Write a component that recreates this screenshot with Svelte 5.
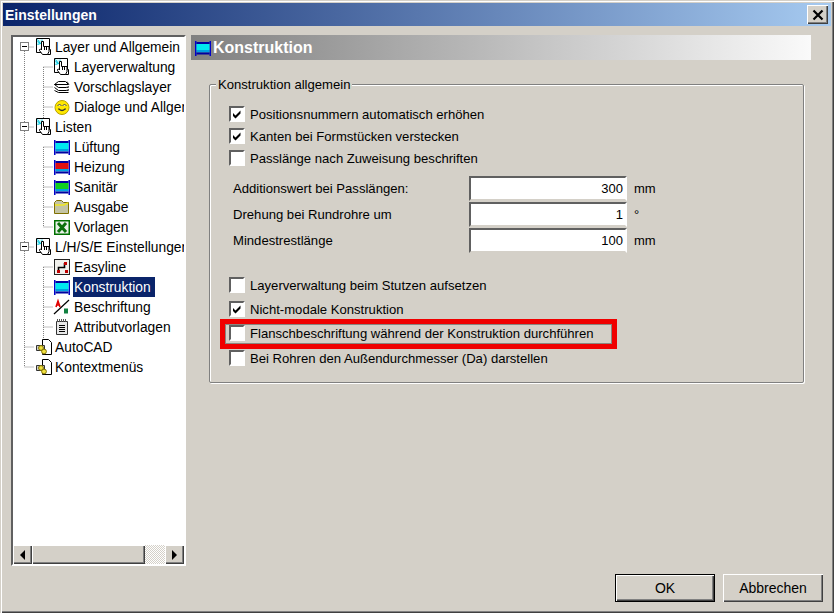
<script>
  const tree = [
    { label: 'Layer und Allgemein', icon: 'hand', level: 0 },
    { label: 'Layerverwaltung', icon: 'hand', level: 1 },
    { label: 'Vorschlagslayer', icon: 'stack', level: 1 },
    { label: 'Dialoge und Allgemein', icon: 'smiley', level: 1 },
    { label: 'Listen', icon: 'hand', level: 0 },
    { label: 'Lüftung', icon: 'duct', color: '#00e8f0', level: 1 },
    { label: 'Heizung', icon: 'duct', color: '#e01010', level: 1 },
    { label: 'Sanitär', icon: 'duct', color: '#10d020', level: 1 },
    { label: 'Ausgabe', icon: 'folder', level: 1 },
    { label: 'Vorlagen', icon: 'excel', level: 1 },
    { label: 'L/H/S/E Einstellungen', icon: 'hand', level: 0 },
    { label: 'Easyline', icon: 'easy', level: 1 },
    { label: 'Konstruktion', icon: 'duct', color: '#00e8f0', level: 1, selected: true },
    { label: 'Beschriftung', icon: 'label', level: 1 },
    { label: 'Attributvorlagen', icon: 'note', level: 1 },
    { label: 'AutoCAD', icon: 'cad', level: 0 },
    { label: 'Kontextmenüs', icon: 'cad', level: 0 }
  ];

  const topChecks = [
    { label: 'Positionsnummern automatisch erhöhen', checked: true },
    { label: 'Kanten bei Formstücken verstecken', checked: true },
    { label: 'Passlänge nach Zuweisung beschriften', checked: false }
  ];

  const fields = [
    { label: 'Additionswert bei Passlängen:', value: '300', unit: 'mm' },
    { label: 'Drehung bei Rundrohre um', value: '1', unit: '°' },
    { label: 'Mindestrestlänge', value: '100', unit: 'mm' }
  ];

  const bottomChecks = [
    { label: 'Layerverwaltung beim Stutzen aufsetzen', checked: false },
    { label: 'Nicht-modale Konstruktion', checked: true },
    { label: 'Flanschbeschriftung während der Konstruktion durchführen', checked: false, marked: true },
    { label: 'Bei Rohren den Außendurchmesser (Da) darstellen', checked: false }
  ];
</script>

{#snippet icon(kind, color)}
  <svg class="icon" viewBox="0 0 16 16" width="16" height="16">
    {#if kind === 'hand'}
      <path d="M0.5 -0.5h13v11h1v5h-6v-2h-8z" fill="#fff" stroke="#000" />
      <path d="M1 0.5h4v5H1z" fill="#c8f4f8" />
      <path d="M1.5 0.5l3 4M6 0.5v3M1.5 5.5l3-1M1.5 2.5l3 2" stroke="#00c8e0" fill="none" />
      <path d="M5.5 2.5h2v5h5.5v5l-1.5 3h-5l-3-4v-1l1 -0.5 1 1z" fill="#fff" stroke="#000" />
      <path d="M8.5 8v3M10.5 8v3" stroke="#000" />
    {:else if kind === 'stack'}
      <path d="M0.5 5.5l4-3h7l3 3zM0.5 5.5l4 3h10M0.5 8.5l4 3h10M0.5 11.5l4 2h10" fill="#fff" stroke="#000" />
      <path d="M13 2.5l2 3M12 8.5l3-1M12 11.5l3-1" stroke="#444" fill="none" />
    {:else if kind === 'smiley'}
      <circle cx="8" cy="8.5" r="7" fill="#ffe800" stroke="#b8a000" />
      <path d="M3.5 6.5q2-2 4 0M8.5 6.5q2-2 4 0" fill="#fff" stroke="#444" />
      <path d="M4 10h1q3 3 6 0h1" fill="none" stroke="#333" stroke-width="1.2" />
    {:else if kind === 'duct'}
      <rect x="0" y="1" width="1.5" height="15" fill="#0000c8" />
      <rect x="14.5" y="1" width="1.5" height="15" fill="#0000c8" />
      <rect x="1.5" y="2" width="13" height="2" fill="#0000a0" />
      <rect x="1.5" y="4" width="13" height="6" fill={color} />
      <rect x="1.5" y="10" width="13" height="2.5" fill="#00a0e0" />
      <rect x="1.5" y="12.5" width="13" height="2" fill="#0000a0" />
    {:else if kind === 'folder'}
      <path d="M0.5 3.5l2-2h5l2 2h5v11h-14z" fill="#c4c4a4" stroke="#807000" />
      <path d="M1 6h9l4-2" fill="none" stroke="#f0e820" stroke-width="1.6" />
    {:else if kind === 'excel'}
      <rect x="0.75" y="1.75" width="14.5" height="13.5" fill="#e8f0e8" stroke="#007000" stroke-width="1.5" />
      <path d="M4 4l8 9M12 4L4 13" stroke="#0a700a" stroke-width="3" />
    {:else if kind === 'easy'}
      <rect x="0.5" y="0.5" width="15" height="15" fill="#f0f0ec" stroke="#222" />
      <path d="M4.5 13V8.5h6V4" fill="none" stroke="#000" stroke-width="1.6" />
      <rect x="10" y="3" width="3" height="3" fill="#c00000" />
      <rect x="3" y="11" width="3" height="3" fill="#c00000" />
      <rect x="11" y="11" width="3" height="3" fill="#c00000" />
    {:else if kind === 'label'}
      <path d="M0 15L15 1" stroke="#000" stroke-width="1.2" />
      <path d="M2 8l2-6 2 6M2.8 6h2.4" fill="none" stroke="#e00000" stroke-width="1.6" />
      <path d="M10 9.5h4v5h-4z" fill="#108040" />
    {:else if kind === 'note'}
      <path d="M2.5 2.5h11v13h-11z" fill="#e8e8e8" stroke="#333" />
      <path d="M3.5 0v3M5.5 0v3M7.5 0v3M9.5 0v3M11.5 0v3" stroke="#555" />
      <path d="M5 6.5h6M5 8.5h6M5 10.5h6M5 12.5h6" stroke="#000" />
    {:else if kind === 'cad'}
      <path d="M6.5 0.5h6l3 3v12h-9z" fill="#fff" stroke="#000" />
      <path d="M0.5 6.5h8v5h-8z" fill="#ccc" stroke="#333" />
      <circle cx="5" cy="9" r="2.4" fill="#f0e040" stroke="#807000" />
      <circle cx="8" cy="12.5" r="2.4" fill="#f0e040" stroke="#807000" />
    {/if}
  </svg>
{/snippet}

{#snippet checkRow(item)}
  <div class="check-row">
    <span class="check">
      {#if item.checked}
        <svg viewBox="0 0 12 12" width="12" height="12"><path d="M2 5l2.5 2.5 5-5v3l-5 5-2.5-2.5z" fill="#000" /></svg>
      {/if}
    </span>
    <span>{item.label}</span>
    {#if item.marked}<span class="mark"></span>{/if}
  </div>
{/snippet}

<div class="window">
  <header class="titlebar">
    <span>Einstellungen</span>
    <button class="close" aria-label="Schließen">
      <svg viewBox="0 0 12 12" width="12" height="12"><path d="M1.5 1.5l9 9M10.5 1.5l-9 9" stroke="#000" stroke-width="2.2" /></svg>
    </button>
  </header>

  <div class="content">
    <aside class="tree">
      <div class="tree-list">
        <svg class="guides" width="172" height="400">
          <path d="M11.5 10v320M11.5 10h10M11.5 90h10M11.5 210h10M11.5 310h10M11.5 330h10M30.5 30v60M30.5 30h10M30.5 50h10M30.5 70h10M30.5 110v80M30.5 110h10M30.5 130h10M30.5 150h10M30.5 170h10M30.5 190h10M30.5 230v80M30.5 230h10M30.5 250h10M30.5 270h10M30.5 290h10" fill="none" stroke="#808080" stroke-dasharray="1 1" />
          {#each [10, 90, 210] as y}
            <rect x="7.5" y={y - 4.5} width="8" height="8" fill="#fff" stroke="#808080" />
            <path d="M9 {y - 0.5}h5" stroke="#000" />
          {/each}
        </svg>
        {#each tree as node}
          <div class="node" class:child={node.level === 1}>
            {@render icon(node.icon, node.color)}
            <span class="label" class:selected={node.selected}>{node.label}</span>
          </div>
        {/each}
      </div>
      <div class="scrollbar">
        <span class="sb-btn"><i class="arrow left"></i></span>
        <span class="sb-thumb"></span>
        <span class="sb-track"></span>
        <span class="sb-btn"><i class="arrow right"></i></span>
      </div>
    </aside>

    <main class="panel">
      <div class="panel-head">
        {@render icon('duct', '#00e8f0')}
        <span>Konstruktion</span>
      </div>

      <section class="group">
        <span class="legend">Konstruktion allgemein</span>
        <div class="checks">
          {#each topChecks as item}
            {@render checkRow(item)}
          {/each}
        </div>
        <div class="fields">
          {#each fields as field}
            <div class="field">
              <span class="field-label">{field.label}</span>
              <span class="input">{field.value}</span>
              <span class="unit">{field.unit}</span>
            </div>
          {/each}
        </div>
        <div class="checks lower">
          {#each bottomChecks as item}
            {@render checkRow(item)}
          {/each}
        </div>
      </section>
    </main>
  </div>

  <footer class="actions">
    <button class="btn default">OK</button>
    <button class="btn">Abbrechen</button>
  </footer>
</div>

<style>
  :global(body) {
    background: #d4d0c8;
  }

  .window {
    width: 834px;
    height: 613px;
    box-sizing: border-box;
    padding: 3px;
    display: flex;
    flex-direction: column;
    background: #d4d0c8;
    font-family: "Liberation Sans", Arial, sans-serif;
    font-size: 13.1px;
    color: #000;
    box-shadow: inset 1px 1px 0 #d4d0c8, inset 2px 2px 0 #fff, inset -1px -1px 0 #404040, inset -2px -2px 0 #808080;
    overflow: hidden;
  }

  .titlebar {
    height: 23px;
    flex: none;
    display: flex;
    align-items: center;
    justify-content: space-between;
    padding: 0 3px 0 2px;
    background: linear-gradient(90deg, #0a246a, #a6caf0);
    color: #fff;
    font-weight: bold;
    font-size: 14px;
  }

  .close {
    width: 21px;
    height: 19px;
    padding: 0;
    display: flex;
    align-items: center;
    justify-content: center;
    background: #d4d0c8;
    border: none;
    box-shadow: inset 1px 1px 0 #fff, inset -1px -1px 0 #404040, inset -2px -2px 0 #808080;
  }

  .content {
    flex: none;
    height: 540px;
    display: flex;
    align-items: flex-start;
    padding: 9px 0 0 8px;
    box-sizing: border-box;
  }

  .tree {
    width: 175px;
    height: 531px;
    flex: none;
    box-sizing: border-box;
    display: flex;
    flex-direction: column;
    background: #fff;
    border: 2px solid;
    border-color: #606060 #fff #fff #606060;
    overflow: hidden;
  }

  .tree-list {
    position: relative;
    flex: 1;
    overflow: hidden;
  }

  .guides {
    position: absolute;
    left: 0;
    top: 0;
  }

  .node {
    position: relative;
    height: 20px;
    display: flex;
    align-items: center;
    padding-left: 23px;
    white-space: nowrap;
  }

  .node.child {
    padding-left: 41px;
  }

  .icon {
    flex: none;
    display: block;
    overflow: visible;
  }

  .label {
    height: 20px;
    line-height: 22px;
    margin-left: 1px;
    padding: 0 4px 0 2px;
    font-size: 13.8px;
  }

  .child .label {
    margin-left: 3px;
    padding-left: 1px;
  }

  .label.selected {
    background: #0a246a;
    color: #fff;
  }

  .scrollbar {
    flex: none;
    height: 19px;
    display: flex;
    background: #d4d0c8;
  }

  .sb-btn,
  .sb-thumb {
    display: flex;
    align-items: center;
    justify-content: center;
    background: #d4d0c8;
    box-shadow: inset 1px 1px 0 #fff, inset -1px -1px 0 #404040, inset -2px -2px 0 #808080;
  }

  .sb-btn {
    width: 19px;
    flex: none;
  }

  .sb-thumb {
    flex: 1;
  }

  .sb-track {
    width: 20px;
    flex: none;
    background: repeating-conic-gradient(#fff 0 25%, #d4d0c8 0 50%) 0 0 / 2px 2px;
  }

  .arrow {
    width: 0;
    height: 0;
    border-style: solid;
    border-color: transparent;
  }

  .arrow.left {
    border-width: 5px 5px 5px 0;
    border-right-color: #000;
  }

  .arrow.right {
    border-width: 5px 0 5px 5px;
    border-left-color: #000;
  }

  .panel {
    width: 620px;
    flex: none;
    margin-left: 5px;
  }

  .panel-head {
    height: 25px;
    display: flex;
    align-items: center;
    gap: 2px;
    padding-left: 4px;
    background: linear-gradient(90deg, #808080, #fafafa);
    color: #fff;
    font-size: 16px;
    font-weight: bold;
  }

  .group {
    position: relative;
    width: 595px;
    height: 299px;
    box-sizing: border-box;
    margin: 24px 0 0 18px;
    padding: 21px 0 0 19px;
    border: 1px solid #808080;
    border-radius: 2px;
    box-shadow: inset 1px 1px 0 #fff, 1px 1px 0 #fff;
  }

  .legend {
    position: absolute;
    left: 6px;
    top: -8px;
    padding: 0 2px;
    background: #d4d0c8;
    line-height: 15px;
  }

  .checks {
    display: flex;
    flex-direction: column;
    gap: 6px;
  }

  .checks.lower {
    margin-top: 24px;
    gap: 8px;
  }

  .check-row {
    position: relative;
    height: 16px;
    display: flex;
    align-items: center;
    gap: 5px;
    white-space: nowrap;
  }

  .lower .check-row:last-child {
    margin-top: 1px;
  }

  .check {
    width: 16px;
    height: 16px;
    flex: none;
    box-sizing: border-box;
    display: flex;
    align-items: center;
    justify-content: center;
    background: #fff;
    border: 2px solid;
    border-color: #606060 #fff #fff #606060;
  }

  .mark {
    position: absolute;
    left: -9px;
    top: -6px;
    width: 397px;
    height: 30px;
    box-sizing: border-box;
    border: 5px solid #f00000;
    box-shadow: inset 0 0 0 1px #8a8680;
  }

  .fields {
    display: flex;
    flex-direction: column;
    gap: 1px;
    margin-top: 10px;
    padding-left: 4px;
  }

  .field {
    height: 25px;
    display: flex;
    align-items: center;
  }

  .field-label {
    width: 236px;
    flex: none;
  }

  .input {
    width: 158px;
    height: 25px;
    flex: none;
    box-sizing: border-box;
    padding-right: 2px;
    background: #fff;
    border: 2px solid;
    border-color: #606060 #fff #d4d0c8 #606060;
    text-align: right;
    line-height: 21px;
    font-size: 13px;
  }

  .unit {
    margin-left: 7px;
    font-size: 13px;
  }

  .actions {
    flex: 1;
    display: flex;
    justify-content: flex-end;
    gap: 8px;
    padding: 8px 8px 0 0;
  }

  .btn {
    width: 100px;
    height: 28px;
    padding: 0;
    background: #d4d0c8;
    border: none;
    font: 14px "Liberation Sans", Arial, sans-serif;
    color: #000;
    box-shadow: inset 1px 1px 0 #fff, inset -1px -1px 0 #404040, inset -2px -2px 0 #808080;
  }

  .btn.default {
    box-shadow: inset 0 0 0 1px #000, inset 2px 2px 0 #fff, inset -2px -2px 0 #404040, inset -3px -3px 0 #808080;
  }
</style>
